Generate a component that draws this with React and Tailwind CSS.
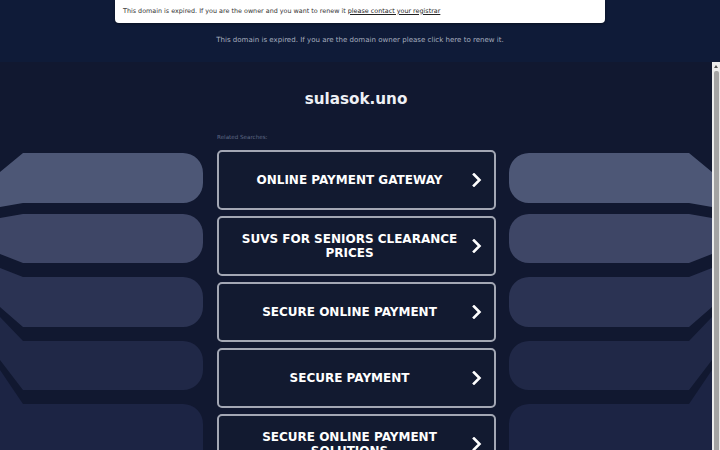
import React from "react";

const font = { fontFamily: '"DejaVu Sans", "Liberation Sans", sans-serif' };

const searches = [
  "ONLINE PAYMENT GATEWAY",
  "SUVS FOR SENIORS CLEARANCE PRICES",
  "SECURE ONLINE PAYMENT",
  "SECURE PAYMENT",
  "SECURE ONLINE PAYMENT SOLUTIONS",
];

// Fanned band decoration, drawn for the left side and mirrored for the right.
const bands = [
  { T: 3, B: 53, t: 22, b: 57, c: "#4d5776" },
  { T: 64, B: 113, t: 68, b: 104, c: "#3e4666" },
  { T: 127, B: 177, t: 118, b: 157, c: "#2b3353" },
  { T: 191, B: 240, t: 167, b: 210, c: "#202847" },
  { T: 254, B: 330, t: 220, b: 330, c: "#1c2444" },
];

function Bands({ className = "" }) {
  return (
    <svg width="216" height="300" viewBox="0 0 216 300" className={className}>
      {bands.map((d, i) => {
        const r = 20;
        return (
          <path
            key={i}
            fill={d.c}
            d={`M0 ${d.t} L23 ${d.T} L${203 - r} ${d.T} A${r} ${r} 0 0 1 203 ${d.T + r} L203 ${d.B - r} A${r} ${r} 0 0 1 ${203 - r} ${d.B} L23 ${d.B} L0 ${d.b} Z`}
          />
        );
      })}
    </svg>
  );
}

function Chevron() {
  return (
    <svg width="10" height="14" viewBox="0 0 10 14" className="shrink-0">
      <path d="M2 1.5 L7.5 7 L2 12.5" fill="none" stroke="#ffffff" strokeWidth="2.6" strokeLinecap="square" />
    </svg>
  );
}

export default function App() {
  return (
    <div className="w-[720px] h-[450px] flex flex-col overflow-hidden bg-[#111830]" style={font}>
      {/* top notice */}
      <div className="h-[62px] shrink-0 bg-[#0f1b38] flex flex-col items-center">
        <div className="w-[490px] h-[23px] shrink-0 bg-white rounded-b-[4px] shadow-[0_1px_3px_rgba(0,0,0,0.4)] flex items-center px-[8px] text-[6.4px] text-[#333]">
          <span>
            This domain is expired. If you are the owner and you want to renew it{" "}
            <span className="underline text-[#222]">please contact your registrar</span>
          </span>
        </div>
        <div className="mt-[13px] shrink-0 text-[7.05px] text-[#a5adbf] leading-none">
          This domain is expired. If you are the domain owner please click here to renew it.
        </div>
      </div>

      {/* framed page with its own scrollbar */}
      <div className="flex-1 flex min-h-0">
        <div className="flex-1 overflow-hidden flex flex-col">
          <div className="h-[28px] shrink-0" />
          <div className="shrink-0 text-center text-[15.2px] font-bold text-[#eef0f5] leading-none h-[20px] flex items-center justify-center">
            sulasok.uno
          </div>
          <div className="h-[23px] shrink-0" />
          <div className="shrink-0 pl-[217px] text-[5.6px] text-[#5f6885] leading-none h-[9px] flex items-center">Related Searches:</div>
          <div className="h-[8px] shrink-0" />
          <div className="flex shrink-0">
            <div className="w-[217px] shrink-0">
              <Bands />
            </div>
            <div className="w-[279px] shrink-0 flex flex-col gap-[6px]">
              {searches.map((s) => (
                <div
                  key={s}
                  className="h-[60px] shrink-0 rounded-[5px] border-2 border-[#a3a7b4] bg-[#121a30] flex items-center pl-[12px] pr-[12px]"
                >
                  <div className="flex-1 text-center text-white font-bold text-[12px] leading-[14.5px] pl-[4px] pr-[8px]">
                    {s}
                  </div>
                  <Chevron />
                </div>
              ))}
            </div>
            <div className="w-[216px] shrink-0">
              <Bands className="-scale-x-100" />
            </div>
          </div>
        </div>
        {/* scrollbar */}
        <div className="w-[8px] shrink-0 bg-[#ececec] flex flex-col items-center">
          <svg width="8" height="9" viewBox="0 0 8 9" className="shrink-0">
            <path d="M2 6 L4 3 L6 6 Z" fill="#505050" />
          </svg>
          <div className="w-[5px] flex-1 bg-[#a3a3a3] rounded-t-[2px]" />
        </div>
      </div>
    </div>
  );
}
